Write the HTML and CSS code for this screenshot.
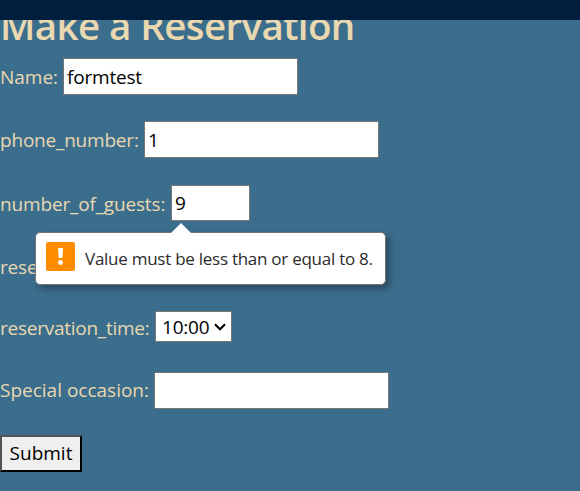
FILE: index.html
```html
<!DOCTYPE html>
<html lang="en">
<head>
<meta charset="utf-8">
<title>Make a Reservation</title>
<link rel="stylesheet" href="styles.css">
</head>
<body>
<header class="topbar"></header>
<main>
  <h1><span>Make a Reservation</span></h1>
  <form novalidate>
    <div class="row"><label class="l-name" for="name">Name:</label><input id="name" type="text" value="formtest"></div>
    <div class="row"><label class="l-phone" for="phone">phone_number:</label><input id="phone" type="text" value="1"></div>
    <div class="row guests"><label class="l-guests" for="guests">number_of_guests:</label><input id="guests" type="text" value="9">
      <div class="bubble" role="alert">
        <svg class="arrow" width="22" height="12" viewBox="0 0 22 12"><path d="M1 11 11 1l10 10v1H1z" fill="#fff"/></svg>
        <svg class="warn" width="29" height="29" viewBox="0 0 29 29"><rect width="29" height="29" rx="2" fill="#ff8c00"/><path d="M12 6h5l-.6 10h-3.8z" fill="#fff"/><circle cx="14.5" cy="20.5" r="2.4" fill="#fff"/></svg>
        <span>Value must be less than or equal to 8.</span>
      </div>
    </div>
    <div class="row"><label class="l-date">reservation_date:</label></div>
    <div class="row time"><label class="l-time">reservation_time:</label><div class="select" role="combobox" tabindex="0"><span>10:00</span><svg width="12" height="8" viewBox="0 0 12 8"><path d="M1 1.3 6 6.2l5-4.9" fill="none" stroke="#000" stroke-width="2.2"/></svg></div></div>
    <div class="row"><label class="l-special" for="special">Special occasion:</label><input id="special" type="text"></div>
    <button type="button"><span>Submit</span></button>
  </form>
</main>
</body>
</html>
```

FILE: styles.css
```css
* { box-sizing: border-box; }
body {
  margin: 0;
  height: 491px;
  overflow: hidden;
  background: #3b6d8c;
  color: #e9d8b0;
  font: 19px/36px "Open Sans", "Noto Sans", sans-serif;
}
.topbar { height: 20px; background: #001f3f; }
h1 {
  display: flex;
  align-items: flex-end;
  height: 38px;
  margin: 0;
  overflow: hidden;
  font-size: 38.5px;
  line-height: 65px;
  font-weight: 600;
  letter-spacing: -.6px;
  white-space: nowrap;
}
form { display: flex; flex-direction: column; align-items: flex-start; }
.row { display: flex; height: 37px; margin-bottom: 26.3px; }
label { flex: none; white-space: nowrap; padding-top: 1px; }
.l-name { width: 63px; }
.l-phone { width: 144px; letter-spacing: -.2px; }
.l-guests { width: 171px; letter-spacing: -.16px; }
.l-date { letter-spacing: -.2px; }
.l-time { width: 155px; letter-spacing: -.25px; }
.l-special { width: 154px; }
input {
  width: 235px;
  height: 37px;
  margin: 0;
  padding: 1px 3px;
  border: 1px solid #767676;
  border-radius: 0;
  background: #fff;
  color: #000;
  font: inherit;
  letter-spacing: -.2px;
  outline: 0;
}
.guests { position: relative; }
.guests input { width: 79px; height: 36px; }
.bubble {
  position: absolute;
  left: 35px;
  top: 47px;
  width: 351px;
  height: 53px;
  display: flex;
  padding: 9px 0 0 10px;
  border: 1px solid #767676;
  border-radius: 5px;
  background: #fff;
  color: #2b2b2b;
  box-shadow: 4px 4px 6px rgba(0, 0, 0, .3);
  font-size: 17px;
  line-height: 33px;
  letter-spacing: -.26px;
  white-space: nowrap;
}
.warn { flex: none; margin-right: 10px; }
.arrow { position: absolute; left: 134px; top: -11px; }
.time { height: 31px; margin-bottom: 29.9px; }
.time label { margin-top: -2px; }
.l-special { margin-top: -1px; }
.select {
  display: flex;
  align-items: center;
  justify-content: space-between;
  width: 77px;
  height: 31px;
  padding: 0 5px 0 6px;
  border: 1px solid #767676;
  background: #fff;
  color: #000;
  letter-spacing: -.2px;
}
button {
  width: 82px;
  height: 37px;
  padding: 0;
  border: 2px outset #000;
  background: #efefef;
  color: #000;
  font: inherit;
  line-height: 33px;
}
```
